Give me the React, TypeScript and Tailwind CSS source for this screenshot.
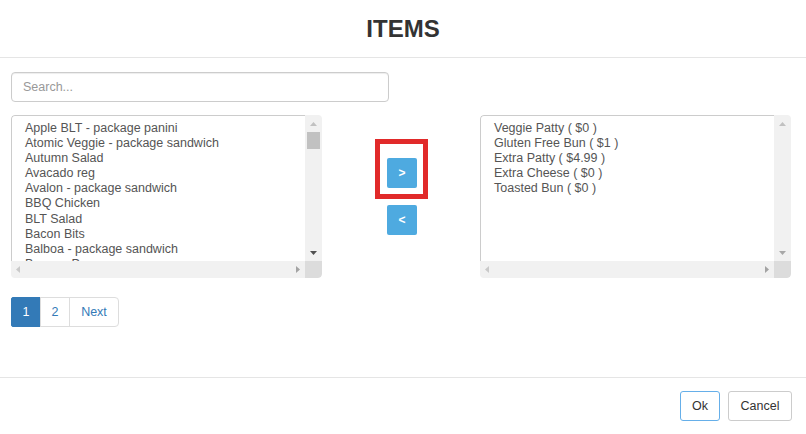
import React from "react";

const leftItems = [
  "Apple BLT - package panini",
  "Atomic Veggie - package sandwich",
  "Autumn Salad",
  "Avacado reg",
  "Avalon - package sandwich",
  "BBQ Chicken",
  "BLT Salad",
  "Bacon Bits",
  "Balboa - package sandwich",
  "Banana Peppers",
];

const rightItems = [
  "Veggie Patty ( $0 )",
  "Gluten Free Bun ( $1 )",
  "Extra Patty ( $4.99 )",
  "Extra Cheese ( $0 )",
  "Toasted Bun ( $0 )",
];

function Tri({ dir, color }: { dir: "up" | "down" | "left" | "right"; color: string }) {
  const pts: Record<string, string> = {
    up: "0,4 3.5,0 7,4",
    down: "0,0 7,0 3.5,4",
    left: "4,0 4,7 0,3.5",
    right: "0,0 0,7 4,3.5",
  };
  const vertical = dir === "up" || dir === "down";
  return (
    <svg width={vertical ? 7 : 4} height={vertical ? 4 : 7} viewBox={vertical ? "0 0 7 4" : "0 0 4 7"}>
      <polygon points={pts[dir]} fill={color} />
    </svg>
  );
}

function ListBox({
  items,
  thumb,
  downColor,
}: {
  items: string[];
  thumb: boolean;
  downColor: string;
}) {
  return (
    <div className="w-[311px] h-[163px] flex flex-col rounded-[4px] overflow-hidden">
      <div className="flex h-[146px]">
        <div className="flex-1 border-t border-l border-[#ccc] rounded-tl-[4px] pl-[13px] pt-[5px] overflow-hidden bg-white">
          {items.map((t) => (
            <div key={t} className="text-[12.5px] leading-[15.1px] text-[#555] whitespace-nowrap">
              {t}
            </div>
          ))}
        </div>
        <div className="w-[17px] bg-[#f1f1f1] flex flex-col items-center">
          <div className="h-[17px] flex items-center justify-center">
            <Tri dir="up" color="#c1c1c1" />
          </div>
          <div className="flex-1 w-full flex flex-col items-center">
            {thumb && <div className="w-[13px] h-[17px] bg-[#c1c1c1]" />}
          </div>
          <div className="h-[17px] flex items-center justify-center">
            <Tri dir="down" color={downColor} />
          </div>
        </div>
      </div>
      <div className="flex h-[17px]">
        <div className="flex-1 bg-[#f1f1f1] flex items-center justify-between px-[5px]">
          <Tri dir="left" color="#c9c9c9" />
          <Tri dir="right" color="#a3a3a3" />
        </div>
        <div className="w-[17px] bg-[#dcdcdc] rounded-br-[4px]" />
      </div>
    </div>
  );
}

export default function App() {
  return (
    <div className="w-[806px] h-[434px] bg-white flex flex-col font-['Liberation_Sans',Arial,sans-serif] text-[#333]">
      <div className="h-[58px] border-b border-[#e5e5e5] flex items-center justify-center">
        <h1 className="text-[24px] font-bold text-[#333] leading-none">ITEMS</h1>
      </div>

      <div className="flex-1 pt-[14px] pl-[11px]">
        <div className="w-[378px] h-[30px] border border-[#ccc] rounded-[4px] flex items-center pl-[11px] shadow-[inset_0_1px_1px_rgba(0,0,0,0.075)]">
          <span className="text-[12.5px] text-[#999]">Search...</span>
        </div>

        <div className="mt-[13px] flex">
          <ListBox items={leftItems} thumb downColor="#505050" />
          <div className="w-[158px] flex flex-col pt-[24px]">
            <div className="ml-[53px] w-[53px] border-[5px] border-[#e12a2a] pl-[7px] pr-[6px] pt-[14px] pb-[6px]">
              <div className="w-[30px] h-[30px] bg-[#4eaae0] rounded-[2px] flex items-center justify-center text-white text-[12px] font-bold">
                &gt;
              </div>
            </div>
            <div className="ml-[65px] mt-[6px] w-[30px] h-[30px] bg-[#4eaae0] rounded-[2px] flex items-center justify-center text-white text-[12px] font-bold">
              &lt;
            </div>
          </div>
          <ListBox items={rightItems} thumb={false} downColor="#a8a8a8" />
        </div>

        <div className="mt-[19px] flex text-[12.5px]">
          <div className="w-[30px] h-[30px] bg-[#337ab7] border border-[#337ab7] rounded-l-[2px] text-white flex items-center justify-center">
            1
          </div>
          <div className="-ml-px w-[30px] h-[30px] border border-[#ddd] text-[#337ab7] flex items-center justify-center">
            2
          </div>
          <div className="-ml-px w-[50px] h-[30px] border border-[#ddd] rounded-r-[4px] text-[#337ab7] flex items-center justify-center">
            Next
          </div>
        </div>
      </div>

      <div className="h-[57px] border-t border-[#e5e5e5] flex justify-end items-start pt-[13px] pr-[14px] gap-[8px]">
        <div className="w-[40px] h-[30px] border border-[#66afe9] rounded-[3px] flex items-center justify-center text-[12.5px] text-[#333]">
          Ok
        </div>
        <div className="w-[64px] h-[30px] border border-[#ccc] rounded-[3px] flex items-center justify-center text-[12.5px] text-[#333]">
          Cancel
        </div>
      </div>
    </div>
  );
}
